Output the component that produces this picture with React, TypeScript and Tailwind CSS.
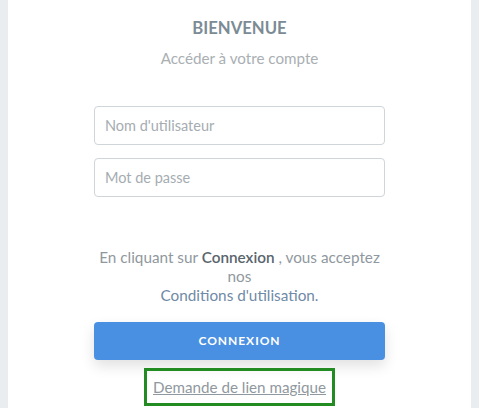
export default function App() {
  return (
    <main className="min-h-screen bg-[#e9edef] px-2 font-['Lato',sans-serif]">
      <div className="flex min-h-screen flex-col items-center bg-white pt-[18px]">
        <h1 className="text-[16.7px] font-bold leading-5 text-[#7b8b95]">BIENVENUE</h1>
        <p className="mt-[10px] text-[15.2px] leading-5 text-[#a9afb3]">Accéder à votre compte</p>

        <form className="mt-[38px] flex w-[291px] flex-col">
          <input
            type="text"
            placeholder="Nom d'utilisateur"
            className="h-[39px] rounded border border-[#cfd5d9] px-[10px] text-[14.5px] text-[#555] placeholder:text-[#a5acb1] outline-none"
          />
          <input
            type="password"
            placeholder="Mot de passe"
            className="mt-[13px] h-[39px] rounded border border-[#cfd5d9] px-[10px] text-[14.5px] text-[#555] placeholder:text-[#a5acb1] outline-none"
          />

          <p className="mt-[51px] px-1 text-center text-[15.3px] leading-[19px] text-[#8f989e]">
            En cliquant sur <span className="font-semibold text-[#59656c]">Connexion</span> , vous acceptez nos
            <br />
            <a href="#" className="text-[#6f8aa6]">Conditions d'utilisation.</a>
          </p>

          <button
            type="button"
            className="mt-[17px] h-[38px] rounded bg-[#4a90e2] text-[12px] font-bold tracking-[0.08em] text-white shadow-[0_6px_14px_rgba(0,0,0,0.12)]"
          >
            CONNEXION
          </button>
        </form>

        <div className="mt-[8px] border-[3px] border-[#228b22] px-[6px] py-[4px]">
          <a href="#" className="text-[15.2px] leading-5 text-[#8f989e] underline">Demande de lien magique</a>
        </div>
      </div>
    </main>
  );
}
